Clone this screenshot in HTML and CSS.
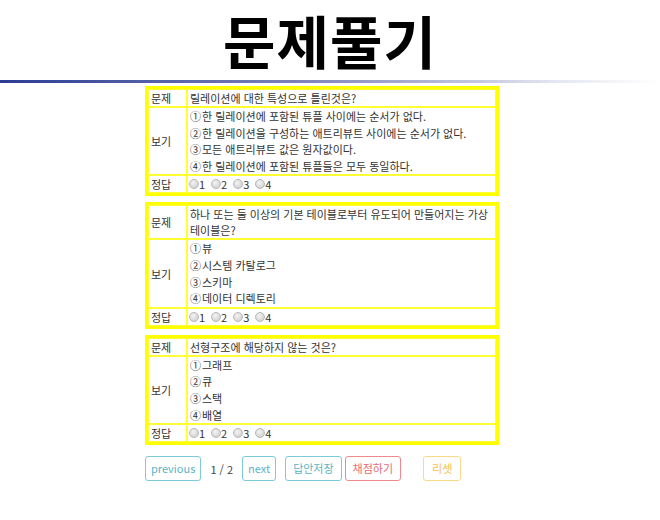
FILE: index.html
```html
<!DOCTYPE html>
<html lang="ko">
<head>
<meta charset="utf-8">
<link rel="stylesheet" href="styles.css">
</head>
<body>
<header class="head"><h1 class="title">문제풀기</h1></header>
<div class="bar"></div>
<div class="wrap">
  <table class="quiz">
    <tr><td class="lbl">문제</td><td class="cnt">릴레이션에 대한 특성으로 틀린것은?</td></tr>
    <tr><td class="lbl">보기</td><td class="cnt">
      <div class="opt"><span class="n">①</span>한 릴레이션에 포함된 튜플 사이에는 순서가 없다.</div>
      <div class="opt"><span class="n">②</span>한 릴레이션을 구성하는 애트리뷰트 사이에는 순서가 없다.</div>
      <div class="opt"><span class="n">③</span>모든 애트리뷰트 값은 원자값이다.</div>
      <div class="opt"><span class="n">④</span>한 릴레이션에 포함된 튜플들은 모두 동일하다.</div>
    </td></tr>
    <tr><td class="lbl">정답</td><td class="cnt ans">
      <span class="r"><i></i>1</span><span class="r"><i></i>2</span><span class="r"><i></i>3</span><span class="r"><i></i>4</span>
    </td></tr>
  </table>
  <table class="quiz">
    <tr><td class="lbl">문제</td><td class="cnt">하나 또는 둘 이상의 기본 테이블로부터 유도되어 만들어지는 가상 테이블은?</td></tr>
    <tr><td class="lbl">보기</td><td class="cnt">
      <div class="opt"><span class="n">①</span>뷰</div>
      <div class="opt"><span class="n">②</span>시스템 카탈로그</div>
      <div class="opt"><span class="n">③</span>스키마</div>
      <div class="opt"><span class="n">④</span>데이터 디렉토리</div>
    </td></tr>
    <tr><td class="lbl">정답</td><td class="cnt ans">
      <span class="r"><i></i>1</span><span class="r"><i></i>2</span><span class="r"><i></i>3</span><span class="r"><i></i>4</span>
    </td></tr>
  </table>
  <table class="quiz">
    <tr><td class="lbl">문제</td><td class="cnt">선형구조에 해당하지 않는 것은?</td></tr>
    <tr><td class="lbl">보기</td><td class="cnt">
      <div class="opt"><span class="n">①</span>그래프</div>
      <div class="opt"><span class="n">②</span>큐</div>
      <div class="opt"><span class="n">③</span>스택</div>
      <div class="opt"><span class="n">④</span>배열</div>
    </td></tr>
    <tr><td class="lbl">정답</td><td class="cnt ans">
      <span class="r"><i></i>1</span><span class="r"><i></i>2</span><span class="r"><i></i>3</span><span class="r"><i></i>4</span>
    </td></tr>
  </table>
  <div class="btns">
    <span class="btn info">previous</span>
    <span class="page">1 / 2</span>
    <span class="btn info">next</span>
    <span class="btn info save">답안저장</span>
    <span class="btn danger">채점하기</span>
    <span class="btn warn">리셋</span>
  </div>
</div>
</body>
</html>
```
FILE: styles.css
```css
html, body { margin: 0; padding: 0; background: #fff; }
body { font-family: "Noto Sans CJK KR", "Noto Sans", sans-serif; color: #333; }
.head { height: 78px; display: flex; justify-content: center; align-items: center; }
.title {
  margin: 0;
  line-height: normal;
  font-size: 57px;
  font-weight: 700;
  color: #000;
  letter-spacing: 1px;
}
.bar {
  height: 3px;
  margin-top: 2px;
  background: linear-gradient(to right, #2c3c94 0%, #7a82b8 45%, #e6e8f2 85%, #ffffff 100%);
}
.wrap { padding-left: 145px; padding-top: 3px; }
.quiz {
  width: 354px;
  border: 3px solid #ffff00;
  border-collapse: separate;
  border-spacing: 0;
  margin-bottom: 6px;
  font-size: 11px;
}
.quiz td {
  border: 1px solid #ffff33;
  padding: 0 2px;
  line-height: 16px;
  vertical-align: middle;
}
.lbl { width: 33px; }
.opt { line-height: 16.6px; }
.n { display: inline-block; width: 12px; }
.ans { line-height: 16px; padding-left: 1px !important; }
.r { display: inline-flex; align-items: center; margin-right: 6px; font-size: 11px; }
.r i {
  display: inline-block;
  width: 8px; height: 8px;
  border-radius: 50%;
  border: 1px solid #b8b8b8;
  background: radial-gradient(circle at 40% 35%, #f4f4f4, #c8c8c8);
}
.btns { display: flex; align-items: center; margin-top: 11px; font-size: 11px; }
.btn {
  display: inline-block;
  height: 25px;
  line-height: 23px;
  padding: 0 5px;
  border-radius: 3px;
  border: 1px solid;
  box-sizing: border-box;
}
.info { border-color: #7ccbdc; color: #5ab3c6; }
.danger { border-color: #ef8a90; color: #e56b73; padding: 0 7px; }
.warn { border-color: #fcd88a; color: #f6c04f; margin-left: 22px; padding: 0 8px; }
.page { margin: 0 9px 0 9px; color: #444; }
.save { margin-left: 9px; margin-right: 3px; padding: 0 7px; }
```
